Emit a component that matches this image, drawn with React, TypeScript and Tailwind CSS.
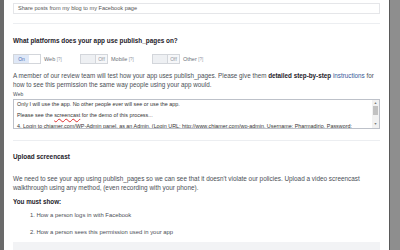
import React from 'react';

function Toggle({ on, label }: { on: boolean; label: string }) {
  return (
    <div className="flex items-center gap-[3px]">
      <div className="flex h-[10px] w-[28px] border border-[#d3d6db] text-[5px] leading-none">
        {on ? (
          <>
            <div className="flex w-[15px] items-center justify-center bg-[#dfe8f7] text-[#4a6fb5]">On</div>
            <div className="flex-1 bg-white" />
          </>
        ) : (
          <>
            <div className="w-[14px] bg-[#eef0f3]" />
            <div className="flex flex-1 items-center justify-center border-l border-[#d3d6db] bg-[#f6f7f9] text-[#8d949e]">Off</div>
          </>
        )}
      </div>
      <span className="text-[5.5px] text-[#6b6f76]">
        {label} <span className="text-[4.5px] text-[#9197a3]">[?]</span>
      </span>
    </div>
  );
}

export default function App() {
  return (
    <div
      className="flex h-[250px] w-[400px] overflow-hidden bg-[#8b8b8b]"
      style={{ fontFamily: '"Liberation Sans", Arial, sans-serif' }}
    >
      <div className="w-[4px] bg-[#6a6a6a]" />
      <div className="w-[385px] overflow-hidden bg-white px-[9px] pt-[3px] text-[#4b4f56]">
        <div className="flex h-[11px] items-center border border-[#e5e6e9] px-[4px] text-[5.6px] text-[#555]">
          Share posts from my blog to my Facebook page
        </div>
        <div className="mt-[9px] h-px bg-[#eceef1]" />

        <h2 className="mt-[13px] text-[6.4px] font-bold leading-[8px] text-[#1d2129]">
          What platforms does your app use publish_pages on?
        </h2>
        <div className="mt-[9px] flex items-center">
          <div className="w-[67px]">
            <Toggle on label="Web" />
          </div>
          <div className="w-[72px]">
            <Toggle on={false} label="Mobile" />
          </div>
          <Toggle on={false} label="Other" />
        </div>

        <p className="mt-[7px] text-[6.3px] leading-[9px] text-[#4b4f56]">
          A member of our review team will test how your app uses publish_pages. Please give them{' '}
          <b className="text-[#1d2129]">detailed step-by-step</b>{' '}
          <span className="text-[#365899]">instructions</span> for how to see this permission the same way
          people using your app would.
        </p>
        <div className="mt-[2px] text-[5px] leading-[7px] text-[#4b4f56]">Web</div>
        <div className="mt-[1px] flex h-[30px] border border-[#bdc1c9]">
          <div className="flex-1 overflow-hidden px-[3px] pt-[2px] text-[5.4px] leading-[5.5px] text-[#333]">
            <div>Only I will use the app. No other people ever will see or use the app.</div>
            <div className="h-[5.5px]" />
            <div>
              Please see the <span className="underline decoration-[#e03030] decoration-wavy">screencast</span> for
              the demo of this process...
            </div>
            <div className="h-[5.5px]" />
            <div className="whitespace-nowrap">
              4. Login to chiamer.com/WP-Admin panel, as an Admin. (Login URL: http://www.chiamer.com/wp-admin, Username: Pharmadirio, Password:
            </div>
          </div>
          <div className="flex w-[7px] flex-col items-center bg-[#f1f1f1]">
            <div className="mt-[1px] text-[3.5px] leading-[5px] text-[#777]">▲</div>
            <div className="h-[9px] w-[5px] bg-[#c1c1c1]" />
            <div className="flex-1" />
            <div className="mb-[1px] text-[3.5px] leading-[5px] text-[#777]">▼</div>
          </div>
        </div>
        <div className="mt-[11px] h-px bg-[#eceef1]" />

        <h2 className="mt-[12px] text-[6.4px] font-bold leading-[8px] text-[#1d2129]">Upload screencast</h2>
        <p className="mt-[13px] text-[6.4px] leading-[9px] text-[#4b4f56]">
          We need to see your app using publish_pages so we can see that it doesn't violate our policies. Upload a
          video screencast walkthrough using any method, (even recording with your phone).
        </p>
        <div className="mt-[6px] text-[6.3px] font-bold leading-[8px] text-[#1d2129]">You must show:</div>
        <ol className="mt-[1px] pl-[17px] text-[5.9px] text-[#4b4f56]">
          <li className="leading-[17px]">1. How a person logs in with Facebook</li>
          <li className="leading-[17px]">2. How a person sees this permission used in your app</li>
        </ol>
        <div className="mt-[1px] h-[20px] bg-[#f2f3f5]" />
      </div>
      <div className="w-px bg-[#5a5a5a]" />
      <div className="flex-1 bg-[#8e8e8e]" />
    </div>
  );
}
